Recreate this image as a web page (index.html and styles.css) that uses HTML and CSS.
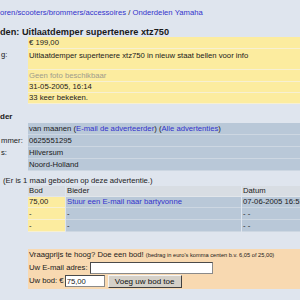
FILE: index.html
```html
<!DOCTYPE html>
<html>

<head>
    <meta charset="utf-8">
    <title>Onderdelen: Uitlaatdemper supertenere xtz750</title>
    <link rel="stylesheet" href="styles.css">
</head>

<body>
    <div class="page">
        <div class="crumbs">
            <a href="#">oren/scooters/brommers/accessoires</a> / <a href="#">Onderdelen Yamaha</a>
        </div>
        <h1 class="ad-title">den: Uitlaatdemper supertenere xtz750</h1>

        <div class="details ad">
            <div class="label"></div>
            <div class="value">&euro; 199,00</div>
            <div class="label">g:</div>
            <div class="value tall">Uitlaatdemper supertenere xtz750 in nieuw staat bellen voor info</div>
            <div class="label"></div>
            <div class="value muted">Geen foto beschikbaar</div>
            <div class="label"></div>
            <div class="value short">31-05-2005, 16:14</div>
            <div class="label"></div>
            <div class="value short">33 keer bekeken.</div>
        </div>

        <h2 class="section-title">der</h2>
        <div class="details seller">
            <div class="label"></div>
            <div class="value">van maanen (<a href="#">E-mail de adverteerder</a>) (<a href="#">Alle advertenties</a>)</div>
            <div class="label">mmer:</div>
            <div class="value">0625551295</div>
            <div class="label">s:</div>
            <div class="value">Hilversum</div>
            <div class="label"></div>
            <div class="value">Noord-Holland</div>
        </div>

        <div class="bids-intro">(Er is 1 maal geboden op deze advertentie.)</div>
        <div class="bids">
            <div class="head">Bod</div>
            <div class="head">Bieder</div>
            <div class="head">Datum</div>

            <div class="amount first">75,00</div>
            <div class="cell first"><a href="#">Stuur een E-mail naar bartyvonne</a></div>
            <div class="cell first">07-06-2005 16:53</div>

            <div class="amount">-</div>
            <div class="cell">-</div>
            <div class="cell">- -</div>

            <div class="amount">-</div>
            <div class="cell">-</div>
            <div class="cell">- -</div>
        </div>

        <form class="bid-form">
            <div class="form-intro">Vraagprijs te hoog? Doe een bod! <span class="hint">(bedrag in euro's komma centen b.v. 6,05 of 25,00)</span></div>
            <div class="form-row email-row">
                <label for="bidEmail">Uw E-mail adres:</label>
                <input type="text" id="bidEmail" name="bidEmail" class="email-input">
            </div>
            <div class="form-row">
                <label for="bidAmount" class="bod-label">Uw bod: &euro;</label>
                <input type="text" id="bidAmount" name="bidAmount" class="bod-input" value="75,00">
                <button type="button" class="bid-button">Voeg uw bod toe</button>
            </div>
        </form>
    </div>
</body>

</html>
```

FILE: styles.css
```css
body {
    margin: 0;
    background-color: #dfe5ee;
    font-family: "Liberation Sans", Arial, sans-serif;
    font-size: 7.7px;
    color: #1a1a1a;
    overflow: hidden;
}

a {
    color: #3333cc;
    text-decoration: none;
}

.page {
    width: 300px;
}

.crumbs {
    padding-top: 7px;
    line-height: 11px;
    white-space: nowrap;
}

.ad-title {
    margin: 9px 0 0 0;
    font-size: 9.2px;
    line-height: 10px;
    white-space: nowrap;
}

.details {
    display: grid;
    grid-template-columns: 28px 1fr;
}

.details .label {
    padding-left: 1px;
    line-height: 11px;
    white-space: nowrap;
}

.details .value {
    padding-left: 1px;
    line-height: 11px;
    border-bottom: 1px solid;
    white-space: nowrap;
}

.ad .value {
    background-color: #fcec9f;
    border-color: #f7f0d2;
}

.ad .value.tall {
    height: 19px;
    padding-top: 1px;
}

.ad .value.short {
    line-height: 10px;
}

.ad .value.muted {
    color: #a09c8c;
}

.section-title {
    margin: 7px 0 0 0;
    font-size: 8px;
    line-height: 12px;
}

.seller .value {
    background-color: #b9c8d8;
    border-color: #cdd7e2;
}

.bids-intro {
    margin-top: 4px;
    padding-left: 3px;
    line-height: 11px;
    white-space: nowrap;
}

.bids {
    display: grid;
    grid-template-columns: 37px 175px 1fr;
    column-gap: 1px;
    margin-left: 28px;
}

.bids > div {
    padding-left: 1px;
    line-height: 11px;
    border-bottom: 1px solid #cdd7e2;
    white-space: nowrap;
    overflow: hidden;
}

.bids .head {
    background-color: #d8dde3;
    line-height: 10px;
    border-color: #e2e6ea;
}

.bids .first {
    line-height: 10px;
}

.bids .amount {
    background-color: #fcec9f;
    border-color: #f7f0d2;
}

.bids .cell {
    background-color: #b9c8d8;
}

.bid-form {
    margin: 17px 0 0 28px;
    padding: 0 0 1px 1px;
    background-color: #f8d9b1;
}

.form-intro {
    line-height: 11px;
    white-space: nowrap;
}

.hint {
    font-size: 5.7px;
}

.form-row {
    display: flex;
    align-items: center;
    height: 14px;
}

.email-row {
    align-items: flex-end;
    height: 13px;
}

.form-row label {
    margin-right: 2px;
    line-height: 12px;
    white-space: nowrap;
}

.form-row .bod-label {
    margin-right: 1px;
}

.form-row input {
    box-sizing: border-box;
    height: 12px;
    padding: 0 1px;
    border: 1px solid #8a8a8a;
    border-top-color: #4a4a4a;
    border-left-color: #4a4a4a;
    background-color: #fff;
    font-family: "Liberation Sans", Arial, sans-serif;
    font-size: 7.7px;
    color: #1a1a1a;
    outline: none;
}

.email-input {
    width: 123px;
}

.bod-input {
    width: 40px;
}

.bid-button {
    box-sizing: border-box;
    width: 74px;
    height: 13px;
    margin-left: 3px;
    padding: 0;
    border: 1px solid #404040;
    border-top-color: #f4f4f4;
    border-left-color: #f4f4f4;
    background-color: #d4d0c8;
    font-family: "Liberation Sans", Arial, sans-serif;
    font-size: 8px;
    color: #111;
}
```
